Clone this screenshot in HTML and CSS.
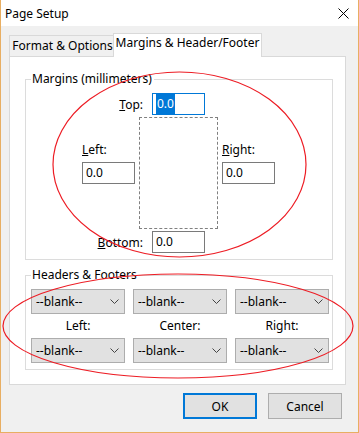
FILE: index.html
```html
<!DOCTYPE html>
<html lang="en">
<head>
    <meta charset="UTF-8">
    <title>Page Setup</title>
    <link rel="stylesheet" href="styles.css">
</head>
<body>

<div class="window">
    <div class="titlebar">
        <span class="title">Page Setup</span>
        <svg class="close" width="11" height="11" viewBox="0 0 11 11">
            <path d="M0.5 0.5 L10.5 10.5 M10.5 0.5 L0.5 10.5" stroke="#000" stroke-width="1" fill="none"/>
        </svg>
    </div>

    <div class="client">
        <div class="tabs">
            <div class="tab tab-format">Format &amp; Options</div>
            <div class="tab tab-margins selected">Margins &amp; Header/Footer</div>
        </div>

        <div class="panel">
            <!-- margins -->
            <div class="group group-margins">
                <span class="group-title">Margins (millimeters)</span>

                <div class="margin-row row-top">
                    <label class="row-label"><u>T</u>op:</label>
                    <div class="field focused"><span class="sel">0.0</span></div>
                </div>

                <div class="side side-left">
                    <label><u>L</u>eft:</label>
                    <div class="field">0.0</div>
                </div>
                <div class="page-box"></div>
                <div class="side side-right">
                    <label><u>R</u>ight:</label>
                    <div class="field">0.0</div>
                </div>

                <div class="margin-row row-bottom">
                    <label class="row-label"><u>B</u>ottom:</label>
                    <div class="field">0.0</div>
                </div>
            </div>

            <!-- headers & footers -->
            <div class="group group-hf">
                <span class="group-title">Headers &amp; Footers</span>

                <div class="combo">--blank--<svg class="chev" width="9" height="5" viewBox="0 0 9 5"><path d="M0.5 0.5 L4.5 4.5 L8.5 0.5" stroke="#444" fill="none"/></svg></div>
                <div class="combo">--blank--<svg class="chev" width="9" height="5" viewBox="0 0 9 5"><path d="M0.5 0.5 L4.5 4.5 L8.5 0.5" stroke="#444" fill="none"/></svg></div>
                <div class="combo">--blank--<svg class="chev" width="9" height="5" viewBox="0 0 9 5"><path d="M0.5 0.5 L4.5 4.5 L8.5 0.5" stroke="#444" fill="none"/></svg></div>

                <div class="hf-label">Left:</div>
                <div class="hf-label">Center:</div>
                <div class="hf-label">Right:</div>

                <div class="combo">--blank--<svg class="chev" width="9" height="5" viewBox="0 0 9 5"><path d="M0.5 0.5 L4.5 4.5 L8.5 0.5" stroke="#444" fill="none"/></svg></div>
                <div class="combo">--blank--<svg class="chev" width="9" height="5" viewBox="0 0 9 5"><path d="M0.5 0.5 L4.5 4.5 L8.5 0.5" stroke="#444" fill="none"/></svg></div>
                <div class="combo">--blank--<svg class="chev" width="9" height="5" viewBox="0 0 9 5"><path d="M0.5 0.5 L4.5 4.5 L8.5 0.5" stroke="#444" fill="none"/></svg></div>
            </div>
        </div>

        <div class="buttons">
            <button class="btn default">OK</button>
            <button class="btn">Cancel</button>
        </div>
    </div>

    <!-- red hand-drawn marks -->
    <svg class="marks" width="359" height="433" viewBox="0 0 359 433">
        <ellipse cx="179.5" cy="164.5" rx="126.5" ry="92.5" fill="none" stroke="#ed1c24" stroke-width="1.2"/>
        <ellipse cx="178" cy="326" rx="175" ry="52" fill="none" stroke="#ed1c24" stroke-width="1.2"/>
    </svg>
</div>

</body>
</html>
```

FILE: styles.css
```css
* {
    box-sizing: border-box;
}

body {
    margin: 0;
    font-family: "Noto Sans", "Open Sans", sans-serif;
    font-size: 12px;
    color: #000;
    background: #fff;
}

.window {
    position: relative;
    width: 359px;
    height: 433px;
    border: 1px solid #e8ae62;
    border-top: none;
    background: #f0f0f0;
}

.titlebar {
    height: 26px;
    background: #fff;
    display: flex;
    align-items: center;
    justify-content: space-between;
    padding: 0 9px 0 4px;
}

.close {
    display: block;
}

.client {
    padding: 7px 0 0 8px;
}

/* tabs */
.tabs {
    display: flex;
    align-items: flex-end;
    height: 23px;
}

.tab {
    border: 1px solid #d9d9d9;
    border-bottom: none;
    text-align: center;
    line-height: 18px;
}

.tab-format {
    width: 105px;
    height: 21px;
    background: #f0f0f0;
    padding-top: 1px;
    padding-left: 2px;
}

.tab.selected {
    position: relative;
    z-index: 1;
    width: 149px;
    height: 24px;
    margin-left: -1px;
    margin-bottom: -1px;
    background: #fff;
}

.panel {
    width: 337px;
    height: 329px;
    background: #fff;
    border: 1px solid #d9d9d9;
    padding: 22px 0 0 15px;
}

/* group boxes */
.group {
    position: relative;
    width: 308px;
    border: 1px solid #dcdcdc;
}

.group-title {
    position: absolute;
    left: 5px;
    top: -10px;
    padding: 0 2px 0 1px;
    background: #fff;
    line-height: 18px;
}

.group-margins {
    height: 181px;
    padding: 13px 0 0 0;
    display: grid;
    grid-template-columns: 113px 79px 114px;
    grid-template-rows: 22px 112px 22px;
    row-gap: 2px;
}

.margin-row {
    grid-column: 1 / -1;
    display: flex;
    align-items: center;
}

.row-label {
    width: 117px;
    text-align: right;
    margin-right: 9px;
}

.field {
    width: 53px;
    height: 22px;
    border: 1px solid #7a7a7a;
    background: #fff;
    padding-left: 3px;
    line-height: 20px;
}

.field.focused {
    border-color: #0078d7;
    padding-left: 4px;
}

.sel {
    display: inline-block;
    vertical-align: top;
    background: #0078d7;
    color: #fff;
    line-height: 20px;
    padding: 0 1px;
    margin-left: -1px;
}

.page-box {
    border: 1px dashed #808080;
}

.side {
    display: flex;
    flex-direction: column;
    padding-top: 24px;
}

.side label {
    line-height: 18px;
    margin-bottom: 3px;
}

.side-left {
    padding-left: 56px;
}

.side-right {
    padding-left: 4px;
}

.group-hf {
    height: 95px;
    margin-top: 15px;
    padding: 13px 0 0 5px;
    display: grid;
    grid-template-columns: repeat(3, 94px);
    grid-template-rows: 25px 24px 25px;
    column-gap: 8px;
}

.combo {
    position: relative;
    background: #e1e1e1;
    border: 1px solid #adadad;
    padding-left: 4px;
    line-height: 23px;
}

.chev {
    position: absolute;
    right: 5px;
    top: 9px;
}

.hf-label {
    text-align: center;
    line-height: 24px;
}

/* bottom buttons */
.buttons {
    display: flex;
    justify-content: flex-end;
    gap: 11px;
    margin-top: 8px;
    padding-right: 16px;
}

.btn {
    width: 74px;
    height: 26px;
    font-family: inherit;
    font-size: 12px;
    color: #000;
    background: #e1e1e1;
    border: 1px solid #adadad;
    padding: 0;
}

.btn.default {
    border: 2px solid #0078d7;
}

.marks {
    position: absolute;
    left: -1px;
    top: 0;
    pointer-events: none;
}
```
